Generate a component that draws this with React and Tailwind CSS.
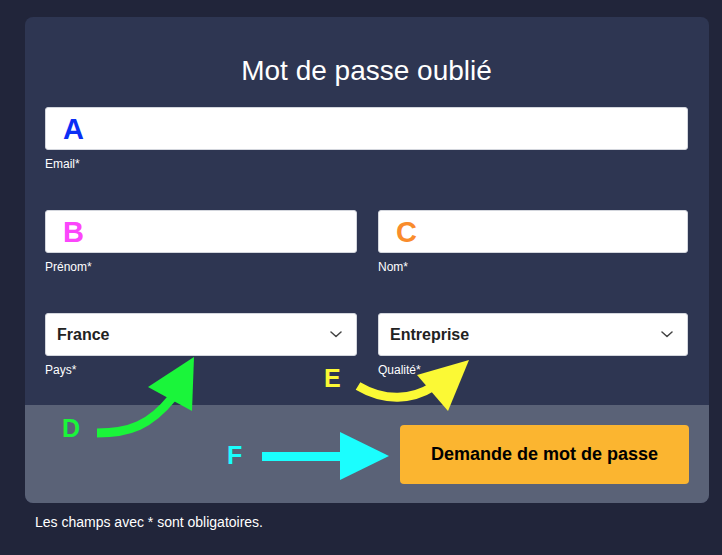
import React from "react";

function Chevron() {
  return (
    <svg width="12" height="7" viewBox="0 0 12 7" fill="none" className="shrink-0">
      <path d="M1 1l5 4.5L11 1" stroke="#444" strokeWidth="1.5" strokeLinecap="round" strokeLinejoin="round" />
    </svg>
  );
}

function Field({ label, children, className = "" }) {
  return (
    <div className={"flex flex-col " + className}>
      {children}
      <div className="mt-[6px] text-[12px] leading-[16px] text-white">{label}</div>
    </div>
  );
}

function TextInput({ letter, color }) {
  return (
    <div className="relative h-[43px] rounded-[3px] border border-[#d3d6dd] bg-white">
      {letter && (
        <span
          className="absolute left-[17px] top-[5px] text-[29px] font-bold leading-[32px]"
          style={{ color }}
        >
          {letter}
        </span>
      )}
    </div>
  );
}

function SelectInput({ value }) {
  return (
    <div className="flex h-[43px] items-center justify-between rounded-[3px] border border-[#d3d6dd] bg-white pl-[11px] pr-[14px]">
      <span className="text-[16px] font-bold text-[#222]">{value}</span>
      <Chevron />
    </div>
  );
}

export default function App() {
  return (
    <div
      className="relative min-h-[555px] w-full bg-[#21253a] pt-[17px]"
      style={{ fontFamily: '"Liberation Sans", Arial, sans-serif' }}
    >
      <div className="mx-[25px] w-[684px] overflow-hidden rounded-[8px] bg-[#2e3652]">
        <div className="pl-[20px] pr-[21px] pt-[37px] pb-[27px]">
          <h1 className="mb-[19px] text-center text-[28px] font-normal leading-[34px] text-white">
            Mot de passe oublié
          </h1>
          <Field label="Email*">
            <TextInput letter="A" color="#0b2ff5" />
          </Field>
          <div className="mt-[38px] grid grid-cols-[312px_1fr] gap-x-[21px]">
            <Field label="Prénom*">
              <TextInput letter="B" color="#fb46fb" />
            </Field>
            <Field label="Nom*">
              <TextInput letter="C" color="#f98c2c" />
            </Field>
          </div>
          <div className="mt-[38px] grid grid-cols-[312px_1fr] gap-x-[21px]">
            <Field label="Pays*">
              <SelectInput value="France" />
            </Field>
            <Field label="Qualité*">
              <SelectInput value="Entreprise" />
            </Field>
          </div>
        </div>
        <div className="flex justify-end bg-[#5a6277] pl-[20px] pr-[20px] pt-[20px] pb-[19px]">
          <button className="h-[59px] w-[289px] rounded-[4px] bg-[#fbb530] text-[18px] font-bold text-black">
            Demande de mot de passe
          </button>
        </div>
      </div>
      <p className="ml-[35px] mt-[9px] text-[14px] leading-[20px] text-white">
        Les champs avec * sont obligatoires.
      </p>

      {/* annotation overlay */}
      <svg
        className="pointer-events-none absolute left-0 top-0"
        width="722"
        height="555"
        viewBox="0 0 722 555"
      >
        {/* D arrow */}
        <path d="M97 433 C130 433 150 425 172 398" stroke="#1af53a" strokeWidth="9" fill="none" />
        <polygon points="148,387 194,357 192,411" fill="#1af53a" />
        {/* E arrow */}
        <path d="M358 386 C385 402 412 400 434 386" stroke="#fbf935" strokeWidth="9" fill="none" />
        <polygon points="417,375 469,360 448,411" fill="#fbf935" />
        {/* F arrow */}
        <rect x="262" y="452" width="80" height="9" fill="#1bfefe" />
        <polygon points="340,432 389,456 340,480" fill="#1bfefe" />
      </svg>
      <span className="absolute left-[62px] top-[414px] text-[25px] font-bold leading-[28px] text-[#1af53a]">D</span>
      <span className="absolute left-[324px] top-[364px] text-[25px] font-bold leading-[28px] text-[#fbf935]">E</span>
      <span className="absolute left-[227px] top-[441px] text-[25px] font-bold leading-[28px] text-[#1bfefe]">F</span>
    </div>
  );
}
